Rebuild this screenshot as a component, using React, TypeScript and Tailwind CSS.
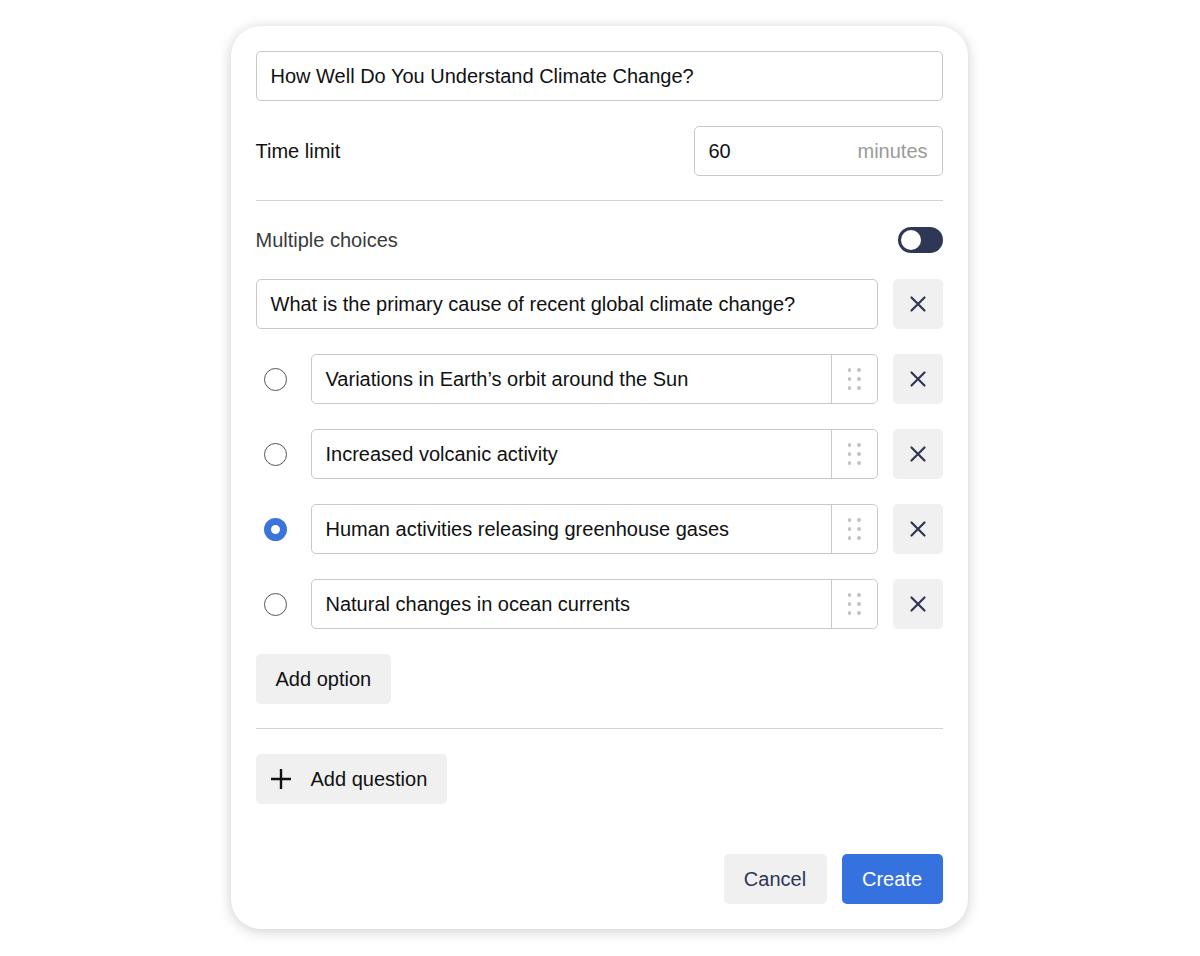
import { useState } from "react";

const options = [
  "Variations in Earth\u2019s orbit around the Sun",
  "Increased volcanic activity",
  "Human activities releasing greenhouse gases",
  "Natural changes in ocean currents",
];

function XIcon() {
  return (
    <svg width="20" height="20" viewBox="0 0 20 20" fill="none" stroke="#2f3554" strokeWidth="2.2" strokeLinecap="round">
      <path d="M3.5 3.5L16.5 16.5M16.5 3.5L3.5 16.5" />
    </svg>
  );
}

function RemoveButton() {
  return (
    <button className="w-[50px] h-[50px] shrink-0 rounded-[5px] bg-[#f0f0f1] flex items-center justify-center">
      <XIcon />
    </button>
  );
}

function DragHandle() {
  return (
    <div className="w-[46px] h-full border-l border-[#c9c9c9] flex items-center justify-center">
      <div className="grid grid-cols-2 gap-x-[6px] gap-y-[5.5px]">
        {Array.from({ length: 6 }).map((_, i) => (
          <span key={i} className="w-[3.5px] h-[3.5px] rounded-full bg-[#c2c2c2]" />
        ))}
      </div>
    </div>
  );
}

export default function App() {
  const [selected, setSelected] = useState(2);

  return (
    <div
      className="min-h-screen bg-white pt-[26px] text-[20px] text-[#111]"
      style={{ fontFamily: '"Liberation Sans", Arial, sans-serif' }}
    >
      <div className="mx-auto w-[737px] -translate-x-px rounded-[30px] bg-white p-[25px] shadow-[0_2px_14px_rgba(0,0,0,0.2)]">
        {/* Title */}
        <div className="h-[50px] rounded-[5px] border border-[#c9c9c9] px-[14px] flex items-center">
          How Well Do You Understand Climate Change?
        </div>

        {/* Time limit */}
        <div className="mt-[25px] h-[50px] flex items-center justify-between">
          <span>Time limit</span>
          <div className="w-[249px] h-[50px] rounded-[5px] border border-[#c9c9c9] px-[14px] flex items-center justify-between">
            <span>60</span>
            <span className="text-[#9a9a9a]">minutes</span>
          </div>
        </div>

        <div className="mt-[24px] h-px bg-[#d2d2d2]" />

        {/* Multiple choices toggle */}
        <div className="mt-[26px] h-[26px] flex items-center justify-between">
          <span className="text-[#3a3a3a]">Multiple choices</span>
          <div className="w-[45px] h-[26px] rounded-full bg-[#2f3757] p-[3px] flex items-center">
            <span className="w-[20px] h-[20px] rounded-full bg-white" />
          </div>
        </div>

        {/* Question */}
        <div className="mt-[26px] flex items-center gap-[15px]">
          <div className="flex-1 h-[50px] rounded-[5px] border border-[#c9c9c9] px-[14px] flex items-center">
            What is the primary cause of recent global climate change?
          </div>
          <RemoveButton />
        </div>

        {/* Options */}
        <div className="mt-[25px] flex flex-col gap-[25px]">
          {options.map((opt, i) => (
            <div key={opt} className="flex items-center gap-[15px]">
              <button onClick={() => setSelected(i)} className="w-[40px] h-[50px] shrink-0 flex items-center pl-[8px]">
                {selected === i ? (
                  <span className="w-[23px] h-[23px] rounded-full border-[7px] border-[#3b74db] bg-white" />
                ) : (
                  <span className="w-[23px] h-[23px] rounded-full border-[1.5px] border-[#555]" />
                )}
              </button>
              <div className="flex-1 h-[50px] rounded-[5px] border border-[#c9c9c9] flex items-center">
                <span className="flex-1 px-[14px]">{opt}</span>
                <DragHandle />
              </div>
              <RemoveButton />
            </div>
          ))}
        </div>

        <button className="mt-[25px] h-[50px] px-[20px] rounded-[5px] bg-[#f0f0f1]">Add option</button>

        <div className="mt-[24px] h-px bg-[#d2d2d2]" />

        <button className="mt-[25px] h-[50px] pl-[13px] pr-[20px] rounded-[5px] bg-[#f0f0f1] flex items-center gap-[18px]">
          <svg width="24" height="24" viewBox="0 0 24 24" fill="none" stroke="#111" strokeWidth="2.4">
            <path d="M12 2V22M2 12H22" />
          </svg>
          <span>Add question</span>
        </button>

        {/* Footer */}
        <div className="mt-[50px] flex justify-end gap-[15px]">
          <button className="h-[50px] w-[103px] rounded-[5px] bg-[#f0f0f1] text-[#2f3554]">Cancel</button>
          <button className="h-[50px] w-[101px] rounded-[5px] bg-[#3572e0] text-white">Create</button>
        </div>
      </div>
    </div>
  );
}
